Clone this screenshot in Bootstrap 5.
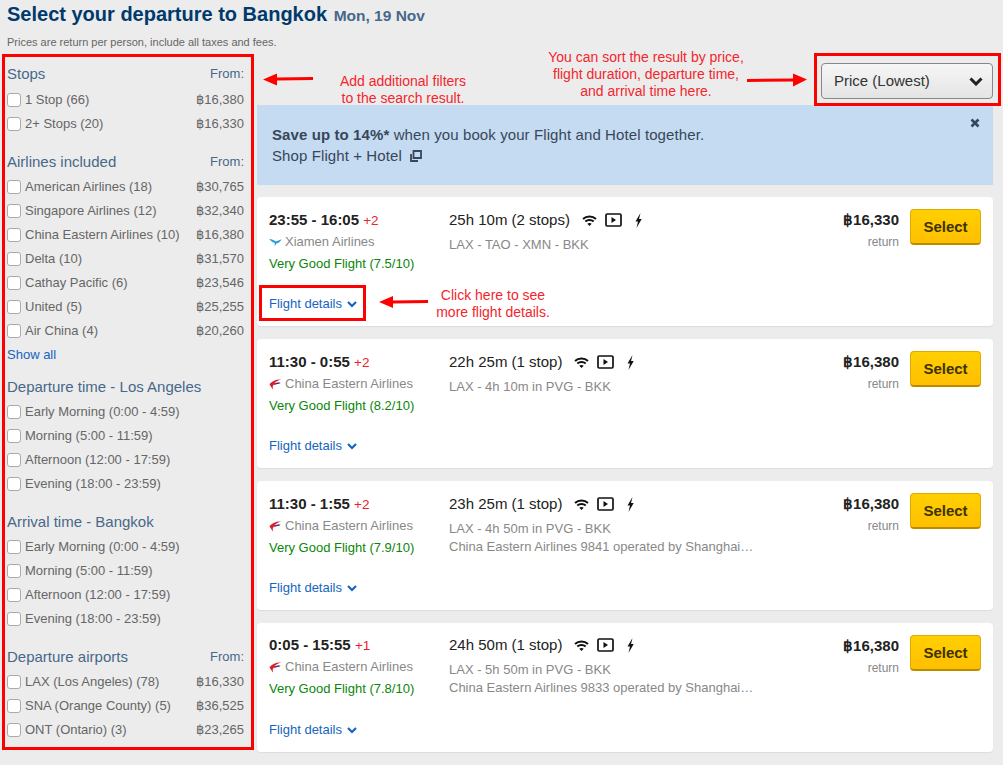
<!DOCTYPE html>
<html lang="en">
<head>
<meta charset="utf-8">
<title>Select your departure</title>
<link href="https://cdn.jsdelivr.net/npm/bootstrap@5.3.0/dist/css/bootstrap.min.css" rel="stylesheet">
<style>
html,body{height:765px;overflow:hidden}
body{background:#ececec;font-family:"Liberation Sans",Arial,sans-serif;font-size:13px;color:#666;position:relative}
.pg-title{font-size:20px;font-weight:700;color:#003a6c;margin:0;line-height:28px;height:28px;padding-left:7px}
.pg-title small{font-size:15.500px;color:#47688a;font-weight:700;margin-left:1px}
.pg-note{font-size:11px;line-height:14px;padding:7px 0 0 7px;height:27px;color:#666;margin:0}
.side-col{width:257px;flex:none;padding:6px 13px 0 7px}
.flt-sec{margin-bottom:13px}
.flt-sec.tight{margin-bottom:7px}
.flt-head{height:26px;line-height:26px;font-size:15px;color:#47688a}
.flt-head.first{height:27px}
.flt-head span{font-size:13px}
.flt-row{height:24px;line-height:24px;font-size:13px;color:#666}
.flt-row .form-check-input{width:14px;height:14px;margin:0 4px 0 0;border-color:#aaa;border-radius:3px;flex:none}
.flt-link{color:#1565c0;text-decoration:none}
.main-col{width:736px;flex:none}
.sort-wrap{height:50px;padding-top:8px}
.sort-btn{width:172px;height:36px;background:linear-gradient(#f6f6f6,#e4e4e4);border:1px solid #888;border-radius:4px;font-size:15px;color:#333;padding:0 9px 0 12px}
.promo{height:80px;background:#c5dbf1;color:#37475a;font-size:15px;line-height:21px;letter-spacing:.1px;padding:19px 15px 0;margin-bottom:12px;border:0;border-radius:0}
.promo-x{position:absolute;top:13px;right:13px}
.trip{height:129px;margin-bottom:13px;border:0;border-radius:4px;padding:0 12px;box-shadow:0 1px 1px #ddd}
.trip.last-trip .c-left,.trip.last-trip .c-mid{margin-top:-1px}
.c-left{width:180px;flex:none}
.c-mid{width:300px;flex:none}
.t-time{font-size:15px;font-weight:700;color:#222;line-height:20px;padding-top:13px;height:33px}
.t-time span{font-size:13.500px;font-weight:400;color:#e8232a}
.t-air{font-size:13px;color:#888;line-height:16px;margin-top:4px;height:16px}
.t-air svg{margin-right:3px}
.t-rate{font-size:13px;color:#0a860a;line-height:16px;margin-top:6px}
.t-det{position:absolute;left:12px;top:99px;font-size:13px;line-height:16px;color:#1565c0;text-decoration:none}
.t-det svg{margin-left:1px}
.t-dur{font-size:15px;color:#222;line-height:20px;padding-top:13px;height:33px}
.ic-wifi{margin-left:12px}
.ic-play{margin-left:8px}
.ic-bolt{margin-left:13px}
.t-route{font-size:13px;color:#888;line-height:16px;margin-top:7px}
.t-extra{font-size:13px;color:#888;line-height:16px;margin-top:2px;white-space:nowrap}
.t-price{width:150px;flex:none;text-align:right;padding-top:13px}
.t-amt{font-size:15px;font-weight:700;color:#222;line-height:20px}
.t-ret{font-size:12px;color:#888;line-height:16px;margin-top:4px}
.sel-btn{width:71px;height:36px;flex:none;margin:12px 0 0 11px;background:linear-gradient(#ffd000,#ffbf00);border:1px solid #e0a800;border-bottom:2px solid #b98c00;border-radius:4px;font-size:15px;font-weight:700;color:#3d3300;padding:1px 0 0}
.mark-box{position:absolute;border:3px solid #f00;pointer-events:none}
.mark-txt{position:absolute;color:#f3262c;font-size:14px;line-height:17px;text-align:center;white-space:nowrap}
.mark-arr{position:absolute}
</style>
</head>
<body>
<svg width="0" height="0" class="position-absolute">
  <defs>
    <symbol id="i-wifi" viewBox="0 0 15 11"><path d="M1 4c3.500-3.200 9.500-3.200 13 0M3.300 6.500c2.300-1.900 6.100-1.900 8.400 0" fill="none" stroke="#111" stroke-width="2"/><path d="M5.300 8.700 7.500 11l2.200-2.300c-1.100-.9-3.300-.9-4.400 0z" fill="#111"/></symbol>
    <symbol id="i-play" viewBox="0 0 17 14"><rect x="1" y="1" width="15" height="12" rx="1.200" fill="none" stroke="#111" stroke-width="1.700"/><path d="M6.500 4v6l4.500-3z" fill="#111"/></symbol>
    <symbol id="i-bolt" viewBox="0 0 7 15"><path d="M5.500 0 .5 8.400h2.500L1.500 15 6.700 6H4z" fill="#111"/></symbol>
    <symbol id="i-ce" viewBox="0 0 14 12"><path d="M13.500 .5C8 0 3.500 2 .5 5.500 1.500 8 3 10 4.500 11.500 3.800 9.500 3.800 8 4.600 6.600 6.500 5 9.500 5 12.500 4.800 10 4 7.500 4 5.500 4.600 7.500 2.500 10.500 1.200 13.500 .5z" fill="#dc1f27"/><path d="M13 3.300C9.500 3.300 6.500 4.600 4.800 7.200 7 5.700 9.800 5.200 13 5.300 10.500 4.800 9 4.500 13 3.300z" fill="#3b2f96"/></symbol>
    <symbol id="i-xm" viewBox="0 0 14 10"><path d="M0 1.500C3 2 5 3 7.500 4.500L13.500 2C12.500 4.500 10.500 6 8 6.500L6 9.500 6.300 6C3.500 5 1.500 3.500 0 1.500z" fill="#2c9ad6"/></symbol>
    <symbol id="i-chev" viewBox="0 0 10 7"><path d="M1 1l4 4 4-4" fill="none" stroke="#1565c0" stroke-width="2.200"/></symbol>
  </defs>
</svg>
<h1 class="pg-title">Select your departure to Bangkok <small>Mon, 19 Nov</small></h1>
<p class="pg-note">Prices are return per person, include all taxes and fees.</p>
<div class="d-flex">
  <aside class="side-col">
    <section class="flt-sec">
      <div class="flt-head first d-flex justify-content-between">Stops<span>From:</span></div>
      <label class="flt-row d-flex align-items-center"><input class="form-check-input" type="checkbox">1 Stop (66)<span class="ms-auto">฿16,380</span></label>
      <label class="flt-row d-flex align-items-center"><input class="form-check-input" type="checkbox">2+ Stops (20)<span class="ms-auto">฿16,330</span></label>
    </section>
    <section class="flt-sec tight">
      <div class="flt-head d-flex justify-content-between">Airlines included<span>From:</span></div>
      <label class="flt-row d-flex align-items-center"><input class="form-check-input" type="checkbox">American Airlines (18)<span class="ms-auto">฿30,765</span></label>
      <label class="flt-row d-flex align-items-center"><input class="form-check-input" type="checkbox">Singapore Airlines (12)<span class="ms-auto">฿32,340</span></label>
      <label class="flt-row d-flex align-items-center"><input class="form-check-input" type="checkbox">China Eastern Airlines (10)<span class="ms-auto">฿16,380</span></label>
      <label class="flt-row d-flex align-items-center"><input class="form-check-input" type="checkbox">Delta (10)<span class="ms-auto">฿31,570</span></label>
      <label class="flt-row d-flex align-items-center"><input class="form-check-input" type="checkbox">Cathay Pacific (6)<span class="ms-auto">฿23,546</span></label>
      <label class="flt-row d-flex align-items-center"><input class="form-check-input" type="checkbox">United (5)<span class="ms-auto">฿25,255</span></label>
      <label class="flt-row d-flex align-items-center"><input class="form-check-input" type="checkbox">Air China (4)<span class="ms-auto">฿20,260</span></label>
      <div class="flt-row"><a class="flt-link" href="#">Show all</a></div>
    </section>
    <section class="flt-sec">
      <div class="flt-head">Departure time - Los Angeles</div>
      <label class="flt-row d-flex align-items-center"><input class="form-check-input" type="checkbox">Early Morning (0:00 - 4:59)</label>
      <label class="flt-row d-flex align-items-center"><input class="form-check-input" type="checkbox">Morning (5:00 - 11:59)</label>
      <label class="flt-row d-flex align-items-center"><input class="form-check-input" type="checkbox">Afternoon (12:00 - 17:59)</label>
      <label class="flt-row d-flex align-items-center"><input class="form-check-input" type="checkbox">Evening (18:00 - 23:59)</label>
    </section>
    <section class="flt-sec">
      <div class="flt-head">Arrival time - Bangkok</div>
      <label class="flt-row d-flex align-items-center"><input class="form-check-input" type="checkbox">Early Morning (0:00 - 4:59)</label>
      <label class="flt-row d-flex align-items-center"><input class="form-check-input" type="checkbox">Morning (5:00 - 11:59)</label>
      <label class="flt-row d-flex align-items-center"><input class="form-check-input" type="checkbox">Afternoon (12:00 - 17:59)</label>
      <label class="flt-row d-flex align-items-center"><input class="form-check-input" type="checkbox">Evening (18:00 - 23:59)</label>
    </section>
    <section class="flt-sec">
      <div class="flt-head d-flex justify-content-between">Departure airports<span>From:</span></div>
      <label class="flt-row d-flex align-items-center"><input class="form-check-input" type="checkbox">LAX (Los Angeles) (78)<span class="ms-auto">฿16,330</span></label>
      <label class="flt-row d-flex align-items-center"><input class="form-check-input" type="checkbox">SNA (Orange County) (5)<span class="ms-auto">฿36,525</span></label>
      <label class="flt-row d-flex align-items-center"><input class="form-check-input" type="checkbox">ONT (Ontario) (3)<span class="ms-auto">฿23,265</span></label>
    </section>
  </aside>
  <main class="main-col">
    <div class="sort-wrap d-flex justify-content-end">
      <button class="sort-btn d-flex align-items-center justify-content-between" type="button">Price (Lowest)
        <svg width="14" height="9" viewBox="0 0 14 9"><path d="M1.500 1.500 7 7l5.500-5.500" fill="none" stroke="#222" stroke-width="3"/></svg>
      </button>
    </div>
    <div class="promo position-relative">
      <div><b>Save up to 14%*</b> when you book your Flight and Hotel together.</div>
      <div class="d-flex align-items-center">Shop Flight + Hotel
        <svg class="ms-2" width="12" height="12" viewBox="0 0 12 12"><path d="M3.500 1h7.500v7H3.500z" fill="none" stroke="#37475a" stroke-width="1.800"/><path d="M1 4v7h7" fill="none" stroke="#37475a" stroke-width="1.800"/></svg>
      </div>
      <svg class="promo-x" width="10" height="10" viewBox="0 0 10 10"><path d="M1.500 1.500l7 7M8.500 1.500l-7 7" stroke="#37475a" stroke-width="2.600"/></svg>
    </div>

    <article class="card trip position-relative flex-row">
      <div class="c-left">
        <div class="t-time">23:55 - 16:05 <span>+2</span></div>
        <div class="t-air d-flex align-items-center"><svg width="13" height="10"><use href="#i-xm"/></svg>Xiamen Airlines</div>
        <div class="t-rate">Very Good Flight (7.5/10)</div>
        <a class="t-det" href="#">Flight details <svg width="10" height="7"><use href="#i-chev"/></svg></a>
      </div>
      <div class="c-mid">
        <div class="t-dur d-flex align-items-center">25h 10m (2 stops)
          <svg class="ic-wifi" width="15" height="11"><use href="#i-wifi"/></svg>
          <svg class="ic-play" width="17" height="14"><use href="#i-play"/></svg>
          <svg class="ic-bolt" width="7" height="15"><use href="#i-bolt"/></svg>
        </div>
        <div class="t-route">LAX - TAO - XMN - BKK</div>
      </div>
      <div class="t-price"><div class="t-amt">฿16,330</div><div class="t-ret">return</div></div>
      <button class="sel-btn" type="button">Select</button>
    </article>

    <article class="card trip position-relative flex-row">
      <div class="c-left">
        <div class="t-time">11:30 - 0:55 <span>+2</span></div>
        <div class="t-air d-flex align-items-center"><svg width="13" height="11"><use href="#i-ce"/></svg>China Eastern Airlines</div>
        <div class="t-rate">Very Good Flight (8.2/10)</div>
        <a class="t-det" href="#">Flight details <svg width="10" height="7"><use href="#i-chev"/></svg></a>
      </div>
      <div class="c-mid">
        <div class="t-dur d-flex align-items-center">22h 25m (1 stop)
          <svg class="ic-wifi" width="15" height="11"><use href="#i-wifi"/></svg>
          <svg class="ic-play" width="17" height="14"><use href="#i-play"/></svg>
          <svg class="ic-bolt" width="7" height="15"><use href="#i-bolt"/></svg>
        </div>
        <div class="t-route">LAX - 4h 10m in PVG - BKK</div>
      </div>
      <div class="t-price"><div class="t-amt">฿16,380</div><div class="t-ret">return</div></div>
      <button class="sel-btn" type="button">Select</button>
    </article>

    <article class="card trip position-relative flex-row">
      <div class="c-left">
        <div class="t-time">11:30 - 1:55 <span>+2</span></div>
        <div class="t-air d-flex align-items-center"><svg width="13" height="11"><use href="#i-ce"/></svg>China Eastern Airlines</div>
        <div class="t-rate">Very Good Flight (7.9/10)</div>
        <a class="t-det" href="#">Flight details <svg width="10" height="7"><use href="#i-chev"/></svg></a>
      </div>
      <div class="c-mid">
        <div class="t-dur d-flex align-items-center">23h 25m (1 stop)
          <svg class="ic-wifi" width="15" height="11"><use href="#i-wifi"/></svg>
          <svg class="ic-play" width="17" height="14"><use href="#i-play"/></svg>
          <svg class="ic-bolt" width="7" height="15"><use href="#i-bolt"/></svg>
        </div>
        <div class="t-route">LAX - 4h 50m in PVG - BKK</div>
        <div class="t-extra">China Eastern Airlines 9841 operated by Shanghai…</div>
      </div>
      <div class="t-price"><div class="t-amt">฿16,380</div><div class="t-ret">return</div></div>
      <button class="sel-btn" type="button">Select</button>
    </article>

    <article class="card trip last-trip position-relative flex-row">
      <div class="c-left">
        <div class="t-time">0:05 - 15:55 <span>+1</span></div>
        <div class="t-air d-flex align-items-center"><svg width="13" height="11"><use href="#i-ce"/></svg>China Eastern Airlines</div>
        <div class="t-rate">Very Good Flight (7.8/10)</div>
        <a class="t-det" href="#">Flight details <svg width="10" height="7"><use href="#i-chev"/></svg></a>
      </div>
      <div class="c-mid">
        <div class="t-dur d-flex align-items-center">24h 50m (1 stop)
          <svg class="ic-wifi" width="15" height="11"><use href="#i-wifi"/></svg>
          <svg class="ic-play" width="17" height="14"><use href="#i-play"/></svg>
          <svg class="ic-bolt" width="7" height="15"><use href="#i-bolt"/></svg>
        </div>
        <div class="t-route">LAX - 5h 50m in PVG - BKK</div>
        <div class="t-extra">China Eastern Airlines 9833 operated by Shanghai…</div>
      </div>
      <div class="t-price"><div class="t-amt">฿16,380</div><div class="t-ret">return</div></div>
      <button class="sel-btn" type="button">Select</button>
    </article>
  </main>
</div>

<!-- annotation overlay -->
<div class="mark-box" style="left:2px;top:54px;width:252px;height:696px"></div>
<div class="mark-box" style="left:814px;top:53px;width:187px;height:53px"></div>
<div class="mark-box" style="left:259px;top:285px;width:107px;height:36px"></div>
<div class="mark-txt" style="left:339px;top:73px;width:128px">Add additional filters<br>to the search result.</div>
<div class="mark-txt" style="left:546px;top:49px;width:200px">You can sort the result by price,<br>flight duration, departure time,<br>and arrival time here.</div>
<div class="mark-txt" style="left:433px;top:287px;width:120px">Click here to see<br>more flight details.</div>
<svg class="mark-arr" style="left:262px;top:72px" width="52" height="16" viewBox="0 0 52 16"><path d="M1 7.500 15 1.500v4l36-.500v3l-36 .500v5z" fill="#f00"/></svg>
<svg class="mark-arr" style="left:746px;top:72px" width="62" height="16" viewBox="0 0 62 16"><path d="M61 7.500 47 1.500v5L1 7v3l46-.500v5z" fill="#f00"/></svg>
<svg class="mark-arr" style="left:378px;top:294px" width="52" height="16" viewBox="0 0 52 16"><path d="M1 8 15 2v4.500L50 6v3l-35 .500V14z" fill="#f00"/></svg>
<script src="https://cdn.jsdelivr.net/npm/bootstrap@5.3.0/dist/js/bootstrap.bundle.min.js"></script>
</body>
</html>
